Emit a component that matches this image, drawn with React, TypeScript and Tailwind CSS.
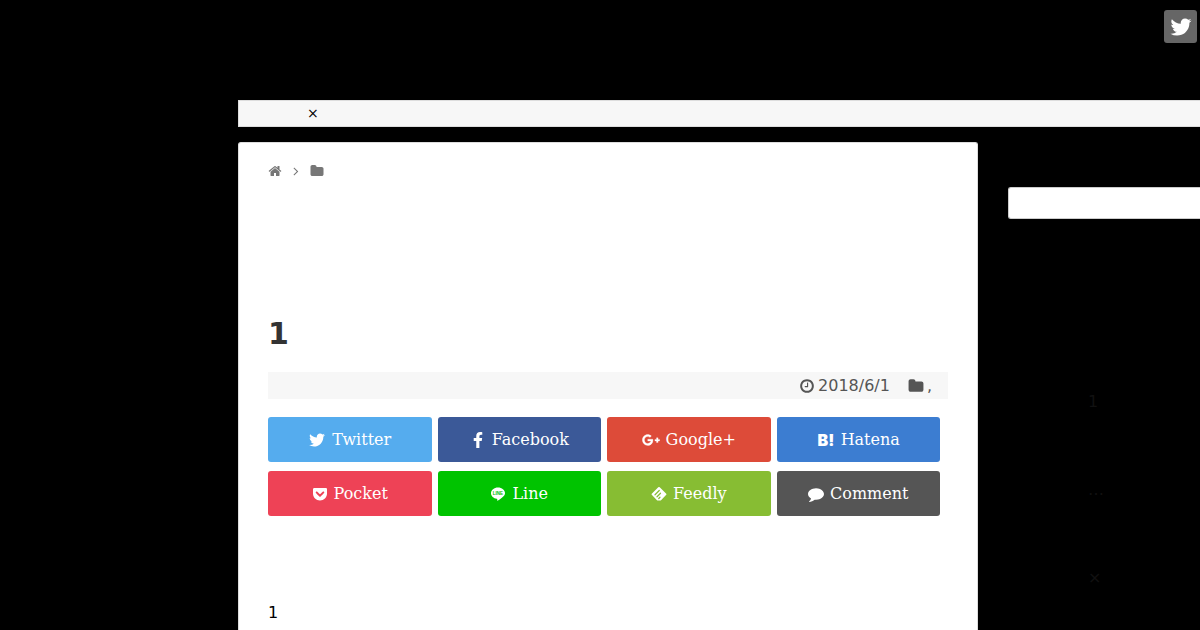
import type { ReactNode } from "react";
import { FaFacebookF, FaGetPocket, FaGooglePlusG } from "react-icons/fa";

const paths = {
  home: "M1472 992v480q0 26-19 45t-45 19h-384v-384h-256v384h-384q-26 0-45-19t-19-45v-480q0-1 .5-3t.5-3l575-474 575 474q1 2 1 6zm223-69l-62 74q-8 9-21 11h-3q-13 0-21-7l-692-577-692 577q-12 8-24 7-13-2-21-11l-62-74q-8-10-7-23.5t11-21.5l719-599q32-26 76-26t76 26l244 204v-195q0-14 9-23t23-9h192q14 0 23 9t9 23v408l219 182q10 8 11 21.5t-7 23.5z",
  folder: "M1728 608v704q0 92-66 158t-158 66h-1216q-92 0-158-66t-66-158v-960q0-92 66-158t158-66h320q92 0 158 66t66 158v32h672q92 0 158 66t66 158z",
  clock: "M1024 544v448q0 14-9 23t-23 9h-320q-14 0-23-9t-9-23v-64q0-14 9-23t23-9h224v-352q0-14 9-23t23-9h64q14 0 23 9t9 23zm416 352q0-148-73-273t-198-198-273-73-273 73-198 198-73 273 73 273 198 198 273 73 273-73 198-198 73-273zm224 0q0 209-103 385.5t-279.5 279.5-385.5 103-385.5-103-279.5-279.5-103-385.5 103-385.5 279.5-279.5 385.5-103 385.5 103 279.5 279.5 103 385.5z",
  angle: "M1171 960q0 13-10 23l-466 466q-10 10-23 10t-23-10l-50-50q-10-10-10-23t10-23l393-393-393-393q-10-10-10-23t10-23l50-50q10-10 23-10t23 10l466 466q10 10 10 23z",
  twitter: "M1684 408q-67 98-162 167 1 14 1 42 0 130-38 259.5t-115.5 248.5-184.5 210.5-258 146-323 54.5q-271 0-496-145 35 4 78 4 225 0 401-138-105-2-188-64.5t-114-159.5q33 5 61 5 43 0 85-11-112-23-185.5-111.5t-73.5-205.5v-4q68 38 146 41-66-44-105-115t-39-154q0-88 44-163 121 149 294.5 238.5t371.5 99.5q-8-38-8-74 0-134 94.5-228.5t228.5-94.5q140 0 236 102 109-21 205-78-37 115-142 178 93-10 186-50z",
  comment: "M1792 896q0 174-120 321.5t-326 233-450 85.5q-70 0-145-8-198 175-460 242-49 14-114 22-17 2-30.5-9t-17.5-29v-1q-3-4-.5-12t2-10 4.5-9.5l6-9 7-8.5 8-9q7-8 31-34.5t34.5-38 31-39.5 32.5-51 27-59 26-76q-157-89-247.5-220t-90.5-281q0-130 71-248.5t191-204.5 286-136.5 348-50.5q244 0 450 85.5t326 233 120 321.5z",
};

function Icon({ name, className }: { name: keyof typeof paths; className: string }) {
  return (
    <svg viewBox="0 0 1792 1792" fill="currentColor" aria-hidden="true" className={className}>
      <path d={paths[name]} />
    </svg>
  );
}

function LineLogo() {
  return (
    <svg viewBox="0 0 32 32" aria-hidden="true" className="size-4">
      <path
        fill="currentColor"
        d="M16 3C8.300 3 2 8 2 14.300c0 5.500 4.900 10.200 11.600 11.100 1.200.3 1 .8.700 2.600-.1.600-.3 2 1.500 1.200 1.800-.8 7.500-4.400 10.700-8.100 2.300-2.500 3.500-4.600 3.500-6.800C30 8 23.700 3 16 3z"
      />
      <text x="16" y="17.500" textAnchor="middle" fontSize="9" fontWeight="700" fontFamily="Liberation Sans, sans-serif" fill="#00c300">
        LINE
      </text>
    </svg>
  );
}

function HatenaLogo() {
  return (
    <svg viewBox="0 0 18 20" aria-hidden="true" className="h-5 w-[18px]">
      <text x="9" y="16" textAnchor="middle" fontSize="16" fontWeight="900" fontFamily="Inter, sans-serif" fill="currentColor">
        B!
      </text>
    </svg>
  );
}

function FeedlyLogo() {
  return (
    <svg viewBox="0 0 32 32" fill="none" aria-hidden="true" className="size-4">
      <path fill="currentColor" d="M14.500 2.600q1.500-1.300 3 0L30.500 15.500q1 1 0 2L20.500 28q-1 1-2.500 1h-4q-1.500 0-2.500-1L1.500 17.500q-1-1 0-2z" />
      <path stroke="#87bd33" strokeWidth="2.400" d="M8 17.500l8.500-8.500M12 21.500l7-7M15.500 25l2.500-2.500" strokeLinecap="round" />
    </svg>
  );
}

const shares: { label: string; color: string; icon: ReactNode }[] = [
  { label: "Twitter", color: "bg-[#55acee]", icon: <Icon name="twitter" className="size-[18px]" /> },
  { label: "Facebook", color: "bg-[#3b5998]", icon: <FaFacebookF className="size-4" /> },
  { label: "Google+", color: "bg-[#dd4b39]", icon: <FaGooglePlusG className="size-[18px]" stroke="currentColor" strokeWidth={10} /> },
  { label: "Hatena", color: "bg-[#3c7dd1]", icon: <HatenaLogo /> },
  { label: "Pocket", color: "bg-[#ee4256]", icon: <FaGetPocket className="size-4" /> },
  { label: "Line", color: "bg-[#00c300]", icon: <LineLogo /> },
  { label: "Feedly", color: "bg-[#87bd33]", icon: <FeedlyLogo /> },
  { label: "Comment", color: "bg-[#555555]", icon: <Icon name="comment" className="size-4" /> },
];

export default function App() {
  return (
    <div className="flex min-h-screen flex-col bg-black font-['DejaVu_Sans',sans-serif] text-base text-black">
      <header className="flex h-[100px] justify-end pt-2.5 pr-[3px]">
        <a href="#twitter" aria-label="Twitter" className="flex size-[33px] items-center justify-center rounded-[3px] bg-[#666] text-white">
          <Icon name="twitter" className="size-6" />
        </a>
      </header>

      <div className="flex grow flex-col pl-[238px]">
        <nav className="flex h-[27px] items-start border border-r-0 border-[#ddd] bg-[#f7f7f7] pl-[68px] text-sm leading-6">
          <a href="#menu">×</a>
        </nav>

        <div className="mt-[15px] flex grow gap-[30px]">
          <main className="min-w-0 flex-1 rounded-t-[3px] border border-b-0 border-[#ddd] bg-white px-[29px] pt-5">
            <nav aria-label="Breadcrumb" className="flex h-4 items-center gap-[7px] text-[#777]">
              <a href="#home" aria-label="Home">
                <Icon name="home" className="size-[14px]" />
              </a>
              <Icon name="angle" className="size-[14px]" />
              <a href="#category" aria-label="Category">
                <Icon name="folder" className="size-[14px]" />
              </a>
            </nav>

            <article>
              <h1 className="mt-[135px] text-[30px] leading-10 font-bold text-[#333]">1</h1>

              <div className="mt-[18px] flex h-[27px] items-center justify-end bg-[#f7f7f7] pr-4 text-[#555]">
                <Icon name="clock" className="mr-[3px] size-4" />
                <time dateTime="2018-06-01">2018/6/1</time>
                <Icon name="folder" className="mr-[3px] ml-[18px] size-4" />
                <span>,</span>
              </div>

              <ul className="mt-[18px] grid grid-cols-4 gap-x-1.5 gap-y-[9px] pr-2 font-['DejaVu_Serif',serif] text-white">
                {shares.map(({ label, color, icon }) => (
                  <li key={label}>
                    <a href={`#${label}`} className={`flex h-[45px] items-center justify-center gap-1.5 rounded-[3px] ${color}`}>
                      {icon}
                      <span>{label}</span>
                    </a>
                  </li>
                ))}
              </ul>

              <p className="mt-[85px] leading-6">1</p>
            </article>
          </main>

          <aside className="w-48 pt-[45px] text-[#111]">
            <input
              type="search"
              aria-label="Search"
              className="block h-8 w-full rounded-l-[3px] border border-r-0 border-[#ccc] bg-white px-2 outline-none"
            />
            <ul className="flex flex-col gap-16 pt-[171px] pl-20 leading-6">
              <li>1</li>
              <li>…</li>
              <li>×</li>
            </ul>
          </aside>
        </div>
      </div>
    </div>
  );
}
